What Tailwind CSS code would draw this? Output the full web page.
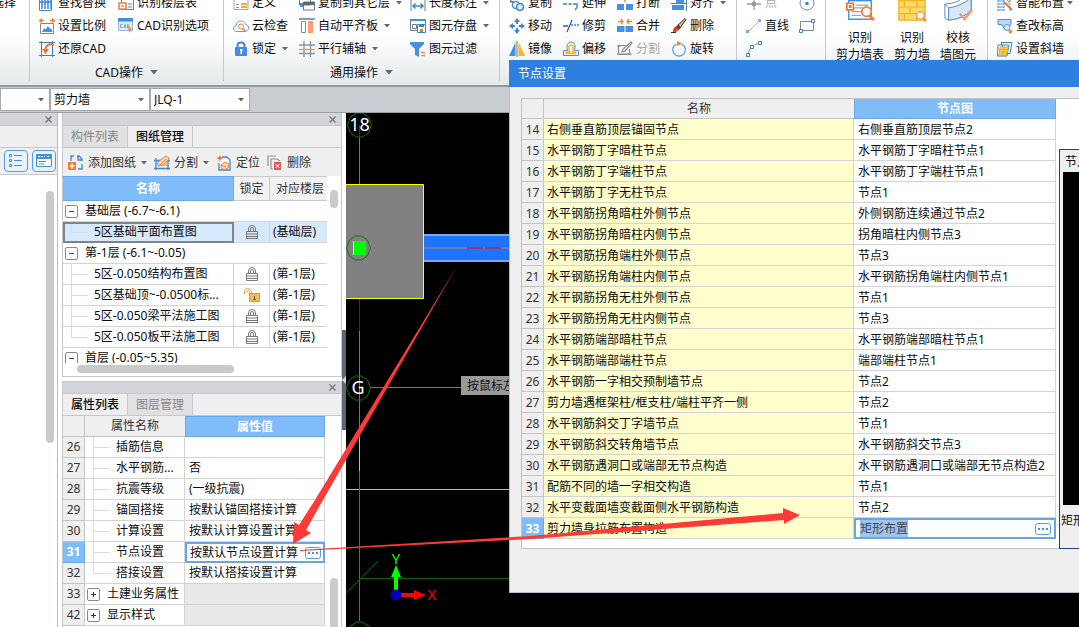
<!DOCTYPE html>
<html lang="zh-CN">
<head>
<meta charset="utf-8">
<title>节点设置</title>
<script src="https://cdn.jsdelivr.net/npm/@tailwindcss/browser@4"></script>
</head>
<body class="relative flex h-screen flex-col overflow-hidden bg-white font-['Noto_Sans','Noto_Sans_CJK_SC',sans-serif] text-[12px] leading-5 text-[#0c0c0c]">

<svg class="hidden">
  <symbol id="find" viewBox="0 0 16 16"><path fill="#fff" stroke="#4a86c8" d="M.5.5h12v15H.5z"/><path stroke="#3d87de" stroke-width="1.500" d="M3 3v11M6 3v11M9 3v11M12 3v11M1 3h11M1 7h11"/></symbol>
  <symbol id="scale" viewBox="0 0 16 16"><path stroke="#f07e30" stroke-width="1.300" fill="none" d="M0 2.500h5M3 .5L1 2.500l2 2M16 2.500h-5M13 .5l2 2-2 2"/><path fill="#fff" stroke="#7d8b95" d="M1.500 5.500h13v10h-13z"/><path fill="#4690e4" d="M3 14l2-4 1.500 1.500L9 8l2 3 1-1 1.500 4z"/></symbol>
  <symbol id="restore" viewBox="0 0 16 16"><path fill="none" stroke="#3f7fc4" d="M2.500 0v16M13.500 0v16M0 1.500h16M0 14.500h16"/><path fill="none" stroke="#f07522" stroke-width="2" d="M15 4c-6-2-9 1-8.500 7"/><path fill="#f07522" d="M3 8h7l-3.500 5z"/></symbol>
  <symbol id="floor" viewBox="0 0 16 16"><path fill="#fff" stroke="#4a86c8" d="M3.500.5h12v14h-12z"/><path fill="#fff" stroke="#f07e30" stroke-width="1.500" d="M1 8h7v6H1z"/><path stroke="#3d87de" d="M10 9h4M10 12h4M3 11h3"/></symbol>
  <symbol id="cad" viewBox="0 0 16 16"><path fill="#dcebfb" stroke="#9fb9d2" d="M.5.5h14v12H.5z"/><path fill="#3f8ce0" d="M0 0h15v3.500H0z"/><path fill="none" stroke="#7da9d8" d="M4.500 6.500h-2v3h2M6 10l1-3.500L8 10M6.300 9h1.600M9.500 6.500v3.500h1q1.500-1.700 0-3.500z"/><path fill="#f08a4a" d="M10 8l5 4-2.500.5L11 15z"/></symbol>
  <symbol id="define" viewBox="0 0 16 16"><path fill="#fff" stroke="#9aa6b0" d="M1 .5h14v14H1z"/><path stroke="#8a9aa8" d="M3 9.500h3M3 12.500h3"/><path fill="#f5b21b" d="M8 8h6v2H8zm0 3h6v2H8z"/></symbol>
  <symbol id="cloud" viewBox="0 0 16 16"><path fill="#fff" stroke="#5b9fe0" d="M4 13.500C-.5 13.500-.5 8.500 3 8c0-6 8-7 9.500-1.500C17 7 16.500 13.500 12 13.500z"/><circle cx="8" cy="8.500" r="2.500" fill="#fff" stroke="#f07e30"/><path stroke="#f07e30" stroke-width="1.500" d="M10 10.500l2.500 2.500"/></symbol>
  <symbol id="bluelock" viewBox="0 0 16 16"><path fill="none" stroke="#3f86d8" stroke-width="2" d="M4.500 8V4.500q0-3 3.500-3t3.500 3V8"/><rect x="2" y="6" width="12" height="9" rx="1" fill="#3f8ce4"/><path fill="#fff" d="M7 8h2.500v2H9v3H7.500v-3H7z"/></symbol>
  <symbol id="copyfloor" viewBox="0 0 16 16"><path fill="#fff" stroke="#6d7b86" d="M.5 1h11v9H.5zM4.500 7h11v8h-11z"/><path fill="#5d6a75" d="M4 7h12v3H4z"/><path fill="#4690e4" d="M1 8h3v4H1z"/></symbol>
  <symbol id="slab" viewBox="0 0 16 16"><path stroke="#3f7fc4" stroke-width="1.500" d="M0 1h16"/><path fill="#fff" stroke="#7d8b95" d="M2.500 3.500h4v11h-4z"/><path fill="#ff9c6b" d="M9 3h5v12H9z"/></symbol>
  <symbol id="axis" viewBox="0 0 16 16"><path fill="none" stroke="#8a949c" stroke-width="1.300" d="M5 0v16M11.500 0v16M0 4h16M0 12.500h16"/><path stroke="#f0905a" stroke-width="1.300" d="M0 8.500h16"/></symbol>
  <symbol id="dim" viewBox="0 0 16 16"><path stroke="#6d7b86" d="M1 0v16M15 0v16"/><path fill="none" stroke="#3f86d8" stroke-width="1.500" d="M3 11h10M5.500 8.500L3 11l2.500 2.500M10.500 8.500L13 11l-2.500 2.500"/></symbol>
  <symbol id="save" viewBox="0 0 16 16"><path fill="#fff" stroke="#6d7b86" d="M.5 1.500h15v11H.5z"/><path fill="#4690e4" d="M0 1h16v2H0z"/><path fill="none" stroke="#6d7b86" d="M2.500 6.500h4v4h-4z"/><path fill="#fff" stroke="#3f7fc4" d="M7.500 6.500h8v8h-8z"/><path fill="#3f7fc4" d="M9 7h5v2H9z"/><path fill="#f07522" d="M10 11h3v3h-3z"/></symbol>
  <symbol id="filter" viewBox="0 0 16 16"><path fill="#4690e4" d="M0 1h14v2L9 8v8l-4-2V8L0 3z"/><path stroke="#f08a4a" stroke-width="1.300" d="M11 11.500h4M11 14.500h4"/></symbol>
  <symbol id="copy" viewBox="0 0 16 16"><path stroke="#6d7b86" stroke-width="2" d="M1 6l5 2"/><circle cx="7" cy="10" r="3.500" fill="#fff" stroke="#4690e4" stroke-width="1.500"/><circle cx="11" cy="12" r="3.500" fill="#d7e8fb" stroke="#3f7fc4" stroke-width="1.500"/></symbol>
  <symbol id="move" viewBox="0 0 16 16"><path fill="#3f86d8" d="M8 0l3 4H9v2H7V4H5zM8 16l3-4H9v-2H7v2H5zM0 8l4-3v2h2v2H4v2zM16 8l-4-3v2h-2v2h2v2z"/></symbol>
  <symbol id="mirror" viewBox="0 0 16 16"><path fill="#4a8fe0" d="M6.500 1v14H0z"/><path fill="#ffb41f" d="M9.500 1v14H16z"/><path stroke="#6d7b86" d="M8 0v16"/></symbol>
  <symbol id="extend" viewBox="0 0 16 16"><path fill="none" stroke="#3f7fc4" stroke-width="1.300" d="M0 9h4M5.500 9h3M10 9h4q1 3-2 6"/></symbol>
  <symbol id="trim" viewBox="0 0 16 16"><path fill="none" stroke="#33618f" stroke-width="1.300" d="M0 8h5M4 14L9 2"/><path stroke="#3f86d8" stroke-width="1.300" stroke-dasharray="2 1" d="M8 7h8"/></symbol>
  <symbol id="offset" viewBox="0 0 16 16"><path fill="#fff" stroke="#4a8fe0" d="M.5 14.500v-5h4q-2-8 3.500-8.500 5.500.5 3.500 8.500h4v5z"/><path fill="none" stroke="#ffb41f" stroke-width="1.500" d="M3 12.500h10M3 12v-1h3.500Q4.500 4 8 4t1.500 7H13v1"/></symbol>
  <symbol id="break" viewBox="0 0 16 16"><path fill="#4690e4" d="M0 9h7v6H0zM9 9h7v6H9z"/><path stroke="#f07e30" stroke-width="1.500" d="M8 1v6"/></symbol>
  <symbol id="merge" viewBox="0 0 16 16"><path fill="#4690e4" d="M0 8h7.500v6H0zM8.500 8H16v6H8.500z"/><path fill="none" stroke="#f08a1c" stroke-width="1.400" d="M1 3.500h5M4 1l2 2.500L4 6M15 3.500h-5M12 1l-2 2.500L12 6"/></symbol>
  <symbol id="splitgray" viewBox="0 0 16 16"><path fill="none" stroke="#8c8c8c" stroke-width="1.200" d="M9 4.500H1.500v9h11V8M0 5h4M0 13h15M5 11l1-3 8-7 1 1-7 8z"/></symbol>
  <symbol id="align" viewBox="0 0 16 16"><path fill="#4690e4" d="M1 10h12v5H1zM5 3h8v5H5z"/><path stroke="#3f7fc4" d="M15.500 0v16M0 8.500h15"/></symbol>
  <symbol id="brush" viewBox="0 0 16 16"><path fill="#e8b070" stroke="#3a3a3a" d="M15 1.500L14 .5 7 7l2.500 2.500z"/><path fill="#4a4a4a" d="M7 6.500L4.500 9 8 12l2-2.500z"/><path fill="#e0421c" d="M5 8.500Q2 9 2 14q5 .5 6-3z"/><path stroke="#333" d="M0 14.500h5"/></symbol>
  <symbol id="rotate" viewBox="0 0 16 16"><path fill="none" stroke="#5b9fe0" stroke-width="1.300" d="M10.500 3a6.300 6.300 0 1 1-5 0"/><path fill="#f08a1c" d="M6 0l5 2.500L6 5z"/></symbol>
  <symbol id="point" viewBox="0 0 16 16"><path stroke="#9a9a9a" stroke-width="1.300" d="M8 2v13M1 9h14"/><path fill="#9a9a9a" d="M6 7h4v4H6z"/></symbol>
  <symbol id="line" viewBox="0 0 16 16"><path stroke="#9eb6cd" d="M2 14L14 2"/><path fill="#7da9dc" d="M0 12h3v3H0zM12 1h3v3h-3z"/></symbol>
  <symbol id="arc" viewBox="0 0 16 16"><path fill="none" stroke="#8a949c" d="M2 14Q3 4 14 2"/><path fill="#fff" stroke="#3f7fc4" d="M.5 12.500h3v3h-3zM4.500 4.500h3v3h-3zM12.500.5h3v3h-3z"/></symbol>
  <symbol id="circle" viewBox="0 0 16 16"><circle cx="8" cy="8" r="7" fill="#fff" stroke="#7d8b95"/><path fill="#3f7fc4" d="M6.500 7h3v3h-3z"/></symbol>
  <symbol id="rect" viewBox="0 0 16 16"><path fill="none" stroke="#7d8b95" d="M1.500 3.500h13v9h-13z"/><path fill="#fff" stroke="#3f7fc4" d="M.5 11.500h3v3h-3zM12.500 1.500h3v3h-3z"/></symbol>
  <symbol id="smart" viewBox="0 0 16 16"><path fill="none" stroke="#4a8fe0" stroke-dasharray="2 1" d="M0 6h8M0 9h9M0 12h8M0 15h8M2 5v11M6 5v11M13 5v11"/><path stroke="#f07522" stroke-width="2" d="M7 7l8 8"/><path stroke="#f07e30" d="M8 3l4 4M14 3l-3 5"/></symbol>
  <symbol id="height" viewBox="0 0 16 16"><path fill="#bdd7f3" stroke="#4a8fe0" d="M1 1.500h13v5l-3 4H7l-2-4H1z"/><circle cx="10" cy="9.500" r="3" fill="#d9e9fa" stroke="#5b8fc8"/><circle cx="13.500" cy="13.500" r="2" fill="#e8953a"/></symbol>
  <symbol id="slant" viewBox="0 0 16 16"><path fill="#fff" stroke="#3f7fc4" d="M4 1.500h11l-2 11H9zM1 4h11l-2 11H.5z"/><path fill="#ffd55c" stroke="#f0a51a" d="M3 6h8l-1.500 8H2zM2.500 8.500h8M2.300 11h8M7 6l-1.500 8"/></symbol>
  <symbol id="idtable" viewBox="0 0 32 32"><path fill="#fff" stroke="#4a8fe0" stroke-width="1.500" d="M4 3h24v26H4z"/><path fill="#3f8ce0" d="M4 7h24v3H4z"/><path stroke="#9aa6b0" stroke-width="1.300" d="M12 14h13M10 17h9M7 21h10M7 25h10"/><path fill="#fff" stroke="#f07522" stroke-width="1.800" d="M2 12h7v7H2z"/><path fill="#f07522" d="M4 14h3v3H4z"/><circle cx="23" cy="21" r="5" fill="#fff" stroke="#f0824a" stroke-width="2"/><path stroke="#f0824a" stroke-width="3" d="M26 25l5 5"/></symbol>
  <symbol id="idwall" viewBox="0 0 32 32"><path fill="#ffd968" stroke="#f3b01f" stroke-width="1.300" d="M2 1h28v29H2zM2 9h28M2 16h28M2 23h28M14 1v8M8 9v7M21 9v7M14 16v7M8 23v7M21 23v7"/><circle cx="25" cy="25" r="4" fill="#fff" stroke="#f0a070" stroke-width="1.500"/><path stroke="#f0824a" stroke-width="2" d="M28 28l3 3"/></symbol>
  <symbol id="check" viewBox="0 0 32 32"><path fill="#fff" stroke="#4a86c8" d="M2 13q16-1 24-11l4 2v14Q22 29 6 30l-4-2z"/><path fill="#d9e8f8" stroke="#4a86c8" d="M6 17Q20 15 30 6v13Q22 29 6 30z"/><path stroke="#4a86c8" fill="none" d="M2 13l4 4"/><path fill="none" stroke="#ff9470" stroke-width="2.500" d="M18 23l5 6 8-10"/></symbol>
  <symbol id="lock" viewBox="0 0 12 14"><path fill="none" stroke="#777" d="M2.500 6V4q0-3.500 3.500-3.500T9.500 4v2M4.500 6V4q0-1.500 1.500-1.500T7.500 4v2M.5 6.500h11v7H.5zM1 9h10M1 11.500h10"/></symbol>
  <symbol id="unlock" viewBox="0 0 16 14"><path fill="none" stroke="#d9a04e" d="M.5 6V3.500q0-3 3-3t4 3V6M3 5V3.500q0-1 1-1t1.500 1V6"/><path fill="#f7bd55" stroke="#dc9a35" d="M5.500 5.500h10v8h-10z"/><path stroke="#7a5a20" d="M10.500 8v4M9 11.500h3"/></symbol>
  <symbol id="dots" viewBox="0 0 16 12"><rect x=".5" y=".5" width="15" height="11" rx="2" fill="#f3f9ff" stroke="#5aa0e0"/><path fill="#4a90d8" d="M3 5h2v2H3zM7 5h2v2H7zM11 5h2v2h-2z"/></symbol>
  <symbol id="down" viewBox="0 0 6 4"><path fill="#666" d="M0 0h6L3 3.500z"/></symbol>
  <symbol id="x" viewBox="0 0 7 7"><path stroke="#777" stroke-width="1.400" d="M.5.5l6 6M6.500.5l-6 6"/></symbol>
  <symbol id="add" viewBox="0 0 16 16"><path fill="none" stroke="#3f86d8" stroke-width="1.300" d="M3 6V1h3M9 1h2l3 3v2M14 9v5h-4M10 1v4h4"/><path fill="#f07e30" d="M0 7h8v8H0z"/><path stroke="#fff" stroke-width="1.500" d="M4 8.500v5M1.500 11h5"/></symbol>
  <symbol id="cut" viewBox="0 0 16 16"><path fill="none" stroke="#3f86d8" stroke-width="1.300" d="M2 3v12M14 3v12M0 13.500h16M0 5.500h16"/><path fill="#ffd9bd" stroke="#f07e30" d="M4 11V7l5-4 3-2 3 2-2 4 1 3H9z"/><path stroke="#f07e30" d="M6 10l6-6M9 10l4-4"/></symbol>
  <symbol id="locate" viewBox="0 0 16 16"><path fill="#fff" stroke="#3f86d8" stroke-width="1.300" d="M6 2h5l3 3v10H3V8"/><path fill="#f07522" d="M0 3l3-1 1-2 1 2 3 1-3 1-1 3-1-3z"/><path fill="#ffd9bd" stroke="#f07e30" d="M5 10l4-3 4 2-1 4-4 2-3-2zM5 10l5 2"/></symbol>
  <symbol id="remove" viewBox="0 0 16 16"><path fill="none" stroke="#8a949c" stroke-width="1.200" d="M1 11V1h8M6 14H4V4h6l3 2"/><path fill="#e05555" d="M7 7h7v8H7z"/><path stroke="#fff" d="M8.500 9l4 4M12.500 9l-4 4"/></symbol>
</svg>

<!-- Ribbon -->
<header class="flex h-[87px] shrink-0 overflow-hidden border-b-2 border-[#8f999e] bg-linear-to-b from-white from-40% to-[#e4e9eb]">
  <div class="-mt-[9px] flex grow [&_button]:flex [&_button]:h-[23px] [&_button]:items-center [&_button]:gap-[3px] [&_button]:whitespace-nowrap [&_svg]:shrink-0">
    <section class="mb-1 w-[30px] shrink-0 border-r border-[#c5c9cc]"><button class="-ml-2">选择</button></section>
    <section class="mb-1 w-[194px] shrink-0 border-r border-[#c5c9cc]">
      <div class="grid h-[69px] grid-flow-col grid-cols-[79px_1fr] grid-rows-3 pl-[9px]">
        <button><svg class="size-4"><use href="#find"/></svg>查找替换</button>
        <button><svg class="size-4"><use href="#scale"/></svg>设置比例</button>
        <button><svg class="size-4"><use href="#restore"/></svg>还原CAD</button>
        <button><svg class="size-4"><use href="#floor"/></svg>识别楼层表</button>
        <button><svg class="size-4"><use href="#cad"/></svg>CAD识别选项</button>
      </div>
      <button class="mx-auto pt-0.5"><span class="pr-1">CAD操作</span><svg class="h-[5px] w-2"><use href="#down"/></svg></button>
    </section>
    <section class="mb-1 w-[276px] shrink-0 border-r border-[#c5c9cc]">
      <div class="grid h-[69px] grid-flow-col grid-cols-[66px_111px_1fr] grid-rows-3 pl-[9px]">
        <button><svg class="size-4"><use href="#define"/></svg>定义</button>
        <button><svg class="size-4"><use href="#cloud"/></svg>云检查</button>
        <button><svg class="size-4"><use href="#bluelock"/></svg>锁定<svg class="ml-[3px] h-1 w-1.5"><use href="#down"/></svg></button>
        <button><svg class="size-4"><use href="#copyfloor"/></svg>复制到其它层<svg class="ml-[3px] h-1 w-1.5"><use href="#down"/></svg></button>
        <button><svg class="size-4"><use href="#slab"/></svg>自动平齐板<svg class="ml-[3px] h-1 w-1.5"><use href="#down"/></svg></button>
        <button><svg class="size-4"><use href="#axis"/></svg>平行辅轴<svg class="ml-[3px] h-1 w-1.5"><use href="#down"/></svg></button>
        <button><svg class="size-4"><use href="#dim"/></svg>长度标注<svg class="ml-[3px] h-1 w-1.5"><use href="#down"/></svg></button>
        <button><svg class="size-4"><use href="#save"/></svg>图元存盘<svg class="ml-[3px] h-1 w-1.5"><use href="#down"/></svg></button>
        <button><svg class="size-4"><use href="#filter"/></svg>图元过滤</button>
      </div>
      <button class="mx-auto pt-0.5"><span class="pr-1">通用操作</span><svg class="h-[5px] w-2"><use href="#down"/></svg></button>
    </section>
    <section class="mb-1 w-[237px] shrink-0 border-r border-[#c5c9cc]">
      <div class="grid h-[69px] grid-flow-col grid-cols-[54px_54px_54px_1fr] grid-rows-3 pl-[9px]">
        <button><svg class="size-4"><use href="#copy"/></svg>复制</button>
        <button><svg class="size-4"><use href="#move"/></svg>移动</button>
        <button><svg class="size-4"><use href="#mirror"/></svg>镜像</button>
        <button><svg class="size-4"><use href="#extend"/></svg>延伸</button>
        <button><svg class="size-4"><use href="#trim"/></svg>修剪</button>
        <button><svg class="size-4"><use href="#offset"/></svg>偏移</button>
        <button><svg class="size-4"><use href="#break"/></svg>打断</button>
        <button><svg class="size-4"><use href="#merge"/></svg>合并</button>
        <button class="text-[#a8a8a8]" disabled><svg class="size-4"><use href="#splitgray"/></svg>分割</button>
        <button><svg class="size-4"><use href="#align"/></svg>对齐<svg class="ml-[3px] h-1 w-1.5"><use href="#down"/></svg></button>
        <button><svg class="size-4"><use href="#brush"/></svg>删除</button>
        <button><svg class="size-4"><use href="#rotate"/></svg>旋转</button>
      </div>
    </section>
    <section class="mb-1 w-[89px] shrink-0 border-r border-[#c5c9cc]">
      <div class="grid h-[69px] grid-flow-col grid-cols-[53px_1fr] grid-rows-3 pl-[9px]">
        <button class="text-[#a8a8a8]" disabled><svg class="size-4"><use href="#point"/></svg>点</button>
        <button><svg class="size-4"><use href="#line"/></svg>直线</button>
        <button aria-label="弧"><svg class="size-4"><use href="#arc"/></svg></button>
        <button aria-label="圆"><svg class="size-4"><use href="#circle"/></svg></button>
        <button aria-label="矩形"><svg class="size-4"><use href="#rect"/></svg></button>
      </div>
    </section>
    <section class="mb-1 flex w-[162px] shrink-0 gap-1 border-r border-[#c5c9cc] pl-[9px] text-center leading-[17px]">
      <a href="#" class="flex w-[50px] flex-col items-center whitespace-nowrap"><svg class="mb-[6px] h-8 w-[30px]"><use href="#idtable"/></svg>识别<br>剪力墙表</a>
      <a href="#" class="flex w-[46px] flex-col items-center whitespace-nowrap"><svg class="mb-[6px] h-8 w-[30px]"><use href="#idwall"/></svg>识别<br>剪力墙</a>
      <a href="#" class="flex w-[38px] flex-col items-center whitespace-nowrap"><svg class="mb-[6px] h-8 w-[30px]"><use href="#check"/></svg>校核<br>墙图元</a>
    </section>
    <section class="grow">
      <div class="grid h-[69px] grid-rows-3 pl-[9px]">
        <button><svg class="size-4"><use href="#smart"/></svg>智能布置<svg class="h-1 w-1.5"><use href="#down"/></svg></button>
        <button><svg class="size-4"><use href="#height"/></svg>查改标高</button>
        <button><svg class="size-4"><use href="#slant"/></svg>设置斜墙</button>
      </div>
    </section>
  </div>
</header>

<!-- Component selectors -->
<nav class="flex h-[26px] shrink-0 items-center border-b border-[#9ba1a6] bg-[#c9ccd1] [&_label]:relative [&_label]:block [&_select]:h-[23px] [&_select]:w-full [&_select]:appearance-none [&_select]:border [&_select]:border-[#a4a7ab] [&_select]:bg-white [&_select]:px-[3px] [&_svg]:pointer-events-none [&_svg]:absolute [&_svg]:right-1.5 [&_svg]:top-[10px] [&_svg]:h-1 [&_svg]:w-1.5">
  <label class="w-[50px]"><select aria-label="楼层"><option></option></select><svg><use href="#down"/></svg></label>
  <label class="w-[100px]"><select aria-label="构件类型"><option>剪力墙</option></select><svg><use href="#down"/></svg></label>
  <label class="w-[100px]"><select aria-label="构件"><option>JLQ-1</option></select><svg><use href="#down"/></svg></label>
</nav>

<main class="flex min-h-0 grow">
  <!-- Component list dock -->
  <aside class="flex w-[58px] shrink-0 flex-col border-r border-[#b9bdc2]">
    <div class="flex h-3 items-center justify-end bg-[#d3d5da] pr-[5px]"><button aria-label="关闭"><svg class="size-[7px]"><use href="#x"/></svg></button></div>
    <div class="flex h-[50px] flex-col justify-between border-y border-[#c4c7cb] bg-[#efefef]">
      <div class="h-[22px] border-b border-[#c4c7cb]"></div>
      <div class="flex gap-1 pb-0.5 pl-1">
        <button aria-label="列表" class="flex h-[22px] w-6 items-center justify-center rounded border border-[#4d9fec] bg-[#e8f3fe]"><svg class="size-4" viewBox="0 0 16 16"><path fill="none" stroke="#4690e4" d="M1.500 1.500h2v2h-2zM1.500 6.500h2v2h-2zM1.500 11.500h2v2h-2zM6 2.500h8M6 7.500h8M6 12.500h8"/></svg></button>
        <button aria-label="窗口" class="flex h-[22px] w-6 items-center justify-center rounded border border-[#4d9fec] bg-[#e8f3fe]"><svg class="size-4" viewBox="0 0 16 16"><path fill="#fff" stroke="#4690e4" d="M.5 1.500h15v12H.5z"/><path fill="#4690e4" d="M0 1h16v5H0z"/><path stroke="#fff" stroke-dasharray="2 1" d="M2 3.500h7M11 3.500h3"/><path stroke="#4690e4" d="M3 8.500h7M3 11h5"/></svg></button>
      </div>
    </div>
    <div class="flex grow justify-end pr-[3px] pt-4"><div class="h-[252px] w-2 rounded-full bg-[#cacaca]"></div></div>
  </aside>

  <!-- Drawing and property docks -->
  <div class="ml-1 flex w-[280px] shrink-0 flex-col gap-1">
    <section class="flex h-[264px] shrink-0 flex-col border border-t-0 border-[#c4c7cb]">
      <div class="flex h-3 shrink-0 items-center justify-end bg-[#d3d5da] pr-[5px]"><button aria-label="关闭"><svg class="size-[7px]"><use href="#x"/></svg></button></div>
      <div class="flex h-[23px] shrink-0 border-y border-[#c4c7cb] bg-[#efefef] leading-[22px]">
        <button class="w-[65px] border-r border-[#c4c7cb] bg-[#e1e1e1] text-[#858585]">构件列表</button>
        <button class="w-[65px] border-r border-[#c4c7cb] font-medium">图纸管理</button>
      </div>
      <div class="flex h-[28px] shrink-0 items-center gap-[7px] bg-[#efefef] pt-px pl-[5px] text-[#333] [&_button]:flex [&_button]:items-center [&_button]:gap-1 [&_button]:whitespace-nowrap">
        <button><svg class="size-4"><use href="#add"/></svg>添加图纸<svg class="ml-px h-1 w-1.5"><use href="#down"/></svg></button>
        <button><svg class="size-4"><use href="#cut"/></svg>分割<svg class="ml-px h-1 w-1.5"><use href="#down"/></svg></button>
        <button><svg class="size-4"><use href="#locate"/></svg>定位</button>
        <button><svg class="size-4"><use href="#remove"/></svg>删除</button>
      </div>
      <div class="flex h-[187px] shrink-0">
        <div class="w-[264px] overflow-hidden">
          <table class="w-full table-fixed border-separate border-spacing-0">
            <thead><tr class="h-[25px] text-[#333]">
              <th class="w-[171px] border border-l-0 border-[#6aa9ea] bg-[#80bbfa] p-0 font-bold text-white">名称</th>
              <th class="w-9 border-y border-r border-[#c9c9c9] bg-[#f2f2f2] p-0 font-normal">锁定</th>
              <th class="border-y border-[#c9c9c9] bg-[#f2f2f2] p-0 pl-[3px] font-normal">对应楼层</th>
            </tr></thead>
            <tbody id="drawings"></tbody>
          </table>
        </div>
        <div class="pl-[3px] pt-[14px]"><div class="h-[18px] w-2 rounded-full bg-[#cacaca]"></div></div>
      </div>
      <div class="pl-[14px] pt-0.5"><div class="h-2 w-[157px] rounded-full bg-[#cacaca]"></div></div>
    </section>

    <section class="flex min-h-0 grow flex-col border border-b-0 border-[#c4c7cb]">
      <div class="flex h-[11px] shrink-0 items-center justify-end bg-[#d3d5da] pr-[5px]"><button aria-label="关闭" class="flex"><svg class="size-[7px]"><use href="#x"/></svg></button></div>
      <div class="flex h-[23px] shrink-0 border-y border-[#c4c7cb] bg-[#efefef] leading-[22px]">
        <button class="w-[65px] border-r border-[#c4c7cb] font-medium">属性列表</button>
        <button class="w-[65px] border-r border-[#c4c7cb] bg-[#e1e1e1] text-[#858585]">图层管理</button>
      </div>
      <div class="flex min-h-0 grow overflow-hidden">
        <div class="w-[262px] shrink-0">
          <table class="w-full table-fixed border-separate border-spacing-0">
            <thead><tr class="h-[21px] text-[#333]">
              <th class="w-[22px] border-r border-b border-[#c4c4c4] bg-[#efefef] p-0"></th>
              <th class="w-[100px] border-b border-[#c4c4c4] bg-[#efefef] p-0 font-normal">属性名称</th>
              <th class="border border-[#6aa9ea] bg-[#80bbfa] p-0 leading-[19px] font-bold text-white">属性值</th>
            </tr></thead>
            <tbody id="props"></tbody>
          </table>
        </div>
        <div class="flex pl-[5px] pt-[162px]"><div class="w-2 rounded-t-full bg-[#cacaca]"></div></div>
      </div>
    </section>
  </div>

  <div class="flex w-1 shrink-0 flex-col pt-[217px]"><button aria-label="折叠面板" class="flex h-[100px] w-1 items-center bg-[#5d6873]"><svg class="h-2 w-1" viewBox="0 0 4 8"><path fill="#d5d8dc" d="M4 0v8L0 4z"/></svg></button></div>

  <!-- Drawing canvas -->
  <div class="min-w-0 grow overflow-hidden bg-black">
    <svg class="h-full w-full font-['Noto_Sans','Noto_Sans_CJK_SC',sans-serif]" aria-label="绘图区">
      <g transform="translate(-346 -113)" fill="none">
        <path stroke="#b00000" d="M359.500 125v13M359.500 299v32"/>
        <path stroke="#777" d="M359.500 138v47M359.500 331v107M371 387.500h90"/>
        <path stroke="#bbb" d="M359.500 438v33M346 489.500h740"/>
        <path stroke="#00a800" d="M359.500 471v150"/>
        <path stroke="#006400" d="M360 578.500h720M346 593l32-32"/>
        <path fill="#808080" stroke="#ff0" d="M340 184.500h83.500v114H340z"/>
        <path fill="#1e73ff" d="M424 234h90v27h-90z"/>
        <path stroke="#7fa6e8" stroke-width="2" d="M424 235h90M424 261h90"/>
        <path stroke="#5c7fb8" stroke-width="2" d="M424 248h90"/>
        <path stroke="#923a7c" stroke-width="2" d="M467 248h16M485 248h16"/>
        <path fill="#0f0" d="M353 241h13v14h-13z"/><path stroke="#ddd" d="M353.500 241v14"/>
        <g stroke="#0b7a0b"><path id="oct" d="M347.500 125l3-8 6-4h6l6 4 3 8-3 8-6 4h-6l-6-4z"/><use href="#oct" x="-1" y="123"/><use href="#oct" x="-1" y="263"/><use href="#oct" y="509"/></g>
        <g fill="#fff" font-size="18" text-anchor="middle"><text x="359.500" y="131">18</text><text x="358" y="394">G</text><text x="359.500" y="640">18</text></g>
        <path fill="#0f0" d="M394 577h4v14h-4zM396 565l5 12h-10z"/><path fill="red" d="M401 593h13v4h-13zM414 590l12 5-12 5z"/><circle cx="396" cy="595" r="5.500" fill="#0000b8"/>
        <g font-size="15" text-anchor="middle"><text x="396" y="564" fill="#0f0">Y</text><text x="432" y="600" fill="red">X</text></g>
        <path fill="#999" d="M461 376h60v19h-60z"/><text x="467" y="390" fill="#111" font-size="12">按鼠标左键</text>
      </g>
    </svg>
  </div>
</main>

<!-- Node settings window -->
<div role="dialog" aria-labelledby="dlg" class="absolute top-[60px] right-0 left-[509px] border-b border-l border-[#b5bfca] bg-[#efefef] pb-[43px]">
  <h1 id="dlg" class="-ml-px flex h-[27px] items-center bg-[#2d80e2] pl-[9px] text-white">节点设置</h1>
  <div class="relative mt-[11px] ml-[11px] border border-r-0 border-[#c1c1c1] bg-white pb-[9px]">
    <table class="w-[534px] table-fixed border-separate border-spacing-0">
      <thead><tr class="h-5 text-[#333]">
        <th class="w-[22px] border-r border-b border-[#c4c4c4] bg-[#efefef] p-0"></th>
        <th class="w-[310px] border-b border-[#c4c4c4] bg-[#efefef] p-0 leading-[19px] font-normal">名称</th>
        <th class="border border-t-0 border-[#6aa9ea] bg-[#80bbfa] p-0 leading-[19px] font-bold text-white">节点图</th>
      </tr></thead>
      <tbody id="nodes" class="leading-[18px]"></tbody>
    </table>
    <section class="absolute top-[50px] right-0 -bottom-px w-5 overflow-hidden border border-r-0 border-[#24407a] bg-[#efefef] whitespace-nowrap">
      <h2 class="h-[22px] pl-[5px] leading-6">节点详图</h2>
      <div class="ml-[3px] h-[333px] bg-black"></div>
      <p class="pt-1 pl-px leading-6">矩形布置</p>
    </section>
  </div>
</div>

<!-- Callout arrows -->
<svg class="pointer-events-none absolute inset-0 h-full w-full" aria-hidden="true">
  <path fill="#fd3a36" d="M457 266L323 500 306 530l5 3-18 11 1-22 5 3 16-25z"/>
  <path fill="#fd3a36" d="M300 550l230-14 253-23v-5l17 7-16 9v-4l-254 19-230 12z"/>
</svg>

<script>
const icon = (n, c) => `<svg class="${c}"><use href="#${n}"/></svg>`;
const drawings = [
  ['基础层 (-6.7~-6.1)'],
  ['5区基础平面布置图', 'lock', '(基础层)'],
  ['第-1层 (-6.1~-0.05)'],
  ['5区-0.050结构布置图', 'lock', '(第-1层)'],
  ['5区基础顶~-0.0500标...', 'unlock', '(第-1层)'],
  ['5区-0.050梁平法施工图', 'lock', '(第-1层)'],
  ['5区-0.050板平法施工图', 'lock', '(第-1层)'],
  ['首层 (-0.05~5.35)'],
];
document.getElementById('drawings').innerHTML = drawings.map(([name, lock, floor], i) => {
  if (!lock) return `<tr><td colspan="3" class="border-b border-[#d4d4d4] p-0"><div class="flex h-5 items-center gap-[7px] pl-0.5"><button aria-label="折叠" class="flex size-[13px] items-center justify-center rounded-[2px] border border-[#888] bg-white"><span class="h-px w-[5px] bg-[#444]"></span></button><span>${name}</span></div></td></tr>`;
  const sel = i === 1, last = i === 1 || i === 6;
  return `<tr class="${sel ? 'bg-[#d6e9fd]' : ''}">
    <td class="${sel ? 'p-0 outline-2 -outline-offset-2 outline-[#808488]' : 'border-r border-b border-[#d4d4d4] p-0'}"><div class="flex ${sel ? 'h-[21px]' : 'h-5'} pl-2"><span class="${last ? 'h-[11px]' : 'h-5'} w-px bg-[#dcdcdc]"></span><span class="mt-[10px] mr-[6px] h-px w-4 bg-[#dcdcdc]"></span><span class="whitespace-nowrap">${name}</span></div></td>
    <td class="border-r border-b border-[#d4d4d4] p-0"><div class="flex justify-center">${icon(lock, lock === 'lock' ? 'h-[14px] w-3' : 'h-[14px] w-4')}</div></td>
    <td class="border-b border-[#d4d4d4] p-0 pl-[3px]">${floor}</td></tr>`;
}).join('');

const props = [
  [26, '插筋信息', ''], [27, '水平钢筋...', '否'], [28, '抗震等级', '(一级抗震)'],
  [29, '锚固搭接', '按默认锚固搭接计算'], [30, '计算设置', '按默认计算设置计算'],
  [31, '节点设置', '按默认节点设置计算'], [32, '搭接设置', '按默认搭接设置计算'],
  [33, '土建业务属性'], [42, '显示样式'],
];
const num = (n, on, pad) => `<td class="${on ? 'border-r border-b border-[#6aa9ea] bg-[#80bbfa] text-center font-bold text-white' : 'border-r border-b border-[#c4c4c4] bg-[#efefef] text-center text-[#333]'} ${pad}">${n}</td>`;
document.getElementById('props').innerHTML = props.map(([n, name, val]) => {
  const group = val === undefined, on = n === 31;
  const label = group
    ? `<div class="flex h-5 items-center gap-[7px] pl-0.5 whitespace-nowrap"><button aria-label="展开" class="flex size-[13px] shrink-0 items-center justify-center rounded-[2px] border border-[#888] bg-white"><svg class="size-[5px]" viewBox="0 0 5 5"><path stroke="#333" d="M2.500 0v5M0 2.500h5"/></svg></button>${name}</div>`
    : `<div class="flex h-5 pl-2"><span class="${n === 32 ? 'h-[11px]' : 'h-5'} w-px bg-[#dcdcdc]"></span><span class="mt-[10px] mr-[6px] h-px w-4 bg-[#dcdcdc]"></span>${name}</div>`;
  return `<tr>${num(n, on, 'p-0')}<td class="border-r border-b border-[#d4d4d4] p-0">${label}</td>
    <td class="${on ? 'p-0 pl-[5px] outline-2 -outline-offset-2 outline-[#68a5e8]' : group ? 'border-r border-b border-[#d4d4d4] bg-[#e9e9e9] p-0' : 'border-r border-b border-[#d4d4d4] p-0 pl-1'}">${on ? `<div class="flex h-[21px] items-center justify-between pr-1 whitespace-nowrap">${val}<button aria-label="更多">${icon('dots', 'h-3 w-4')}</button></div>` : val || ''}</td></tr>`;
}).join('');

const nodes = [
  ['右侧垂直筋顶层锚固节点', '右侧垂直筋顶层节点2'], ['水平钢筋丁字暗柱节点', '水平钢筋丁字暗柱节点1'],
  ['水平钢筋丁字端柱节点', '水平钢筋丁字端柱节点1'], ['水平钢筋丁字无柱节点', '节点1'],
  ['水平钢筋拐角暗柱外侧节点', '外侧钢筋连续通过节点2'], ['水平钢筋拐角暗柱内侧节点', '拐角暗柱内侧节点3'],
  ['水平钢筋拐角端柱外侧节点', '节点3'], ['水平钢筋拐角端柱内侧节点', '水平钢筋拐角端柱内侧节点1'],
  ['水平钢筋拐角无柱外侧节点', '节点1'], ['水平钢筋拐角无柱内侧节点', '节点3'],
  ['水平钢筋端部暗柱节点', '水平钢筋端部暗柱节点1'], ['水平钢筋端部端柱节点', '端部端柱节点1'],
  ['水平钢筋一字相交预制墙节点', '节点2'], ['剪力墙遇框架柱/框支柱/端柱平齐一侧', '节点2'],
  ['水平钢筋斜交丁字墙节点', '节点1'], ['水平钢筋斜交转角墙节点', '水平钢筋斜交节点3'],
  ['水平钢筋遇洞口或端部无节点构造', '水平钢筋遇洞口或端部无节点构造2'], ['配筋不同的墙一字相交构造', '节点1'],
  ['水平变截面墙变截面侧水平钢筋构造', '节点2'], ['剪力墙身拉筋布置构造', '矩形布置'],
];
document.getElementById('nodes').innerHTML = nodes.map(([name, val], i) => {
  const on = i === 19;
  return `<tr>${num(14 + i, on, 'p-0 pt-0.5')}<td class="border-r border-b border-[#d4d4d4] bg-[#ffffce] p-0 pt-0.5 pl-[3px]">${name}</td>
    <td class="${on ? 'p-0 pl-1.5 outline-2 -outline-offset-2 outline-[#68a5e8]' : 'border-r border-b border-[#d4d4d4] p-0 pt-0.5 pl-1'}">${on ? `<div class="flex h-[21px] items-center justify-between pr-[5px]"><input aria-label="节点图" value="${val}" class="h-[17px] w-12 bg-[#9fc2ee] p-0 text-[#3c4654]"><button aria-label="更多">${icon('dots', 'h-3 w-4')}</button></div>` : val}</td></tr>`;
}).join('');
</script>
</body>
</html>
